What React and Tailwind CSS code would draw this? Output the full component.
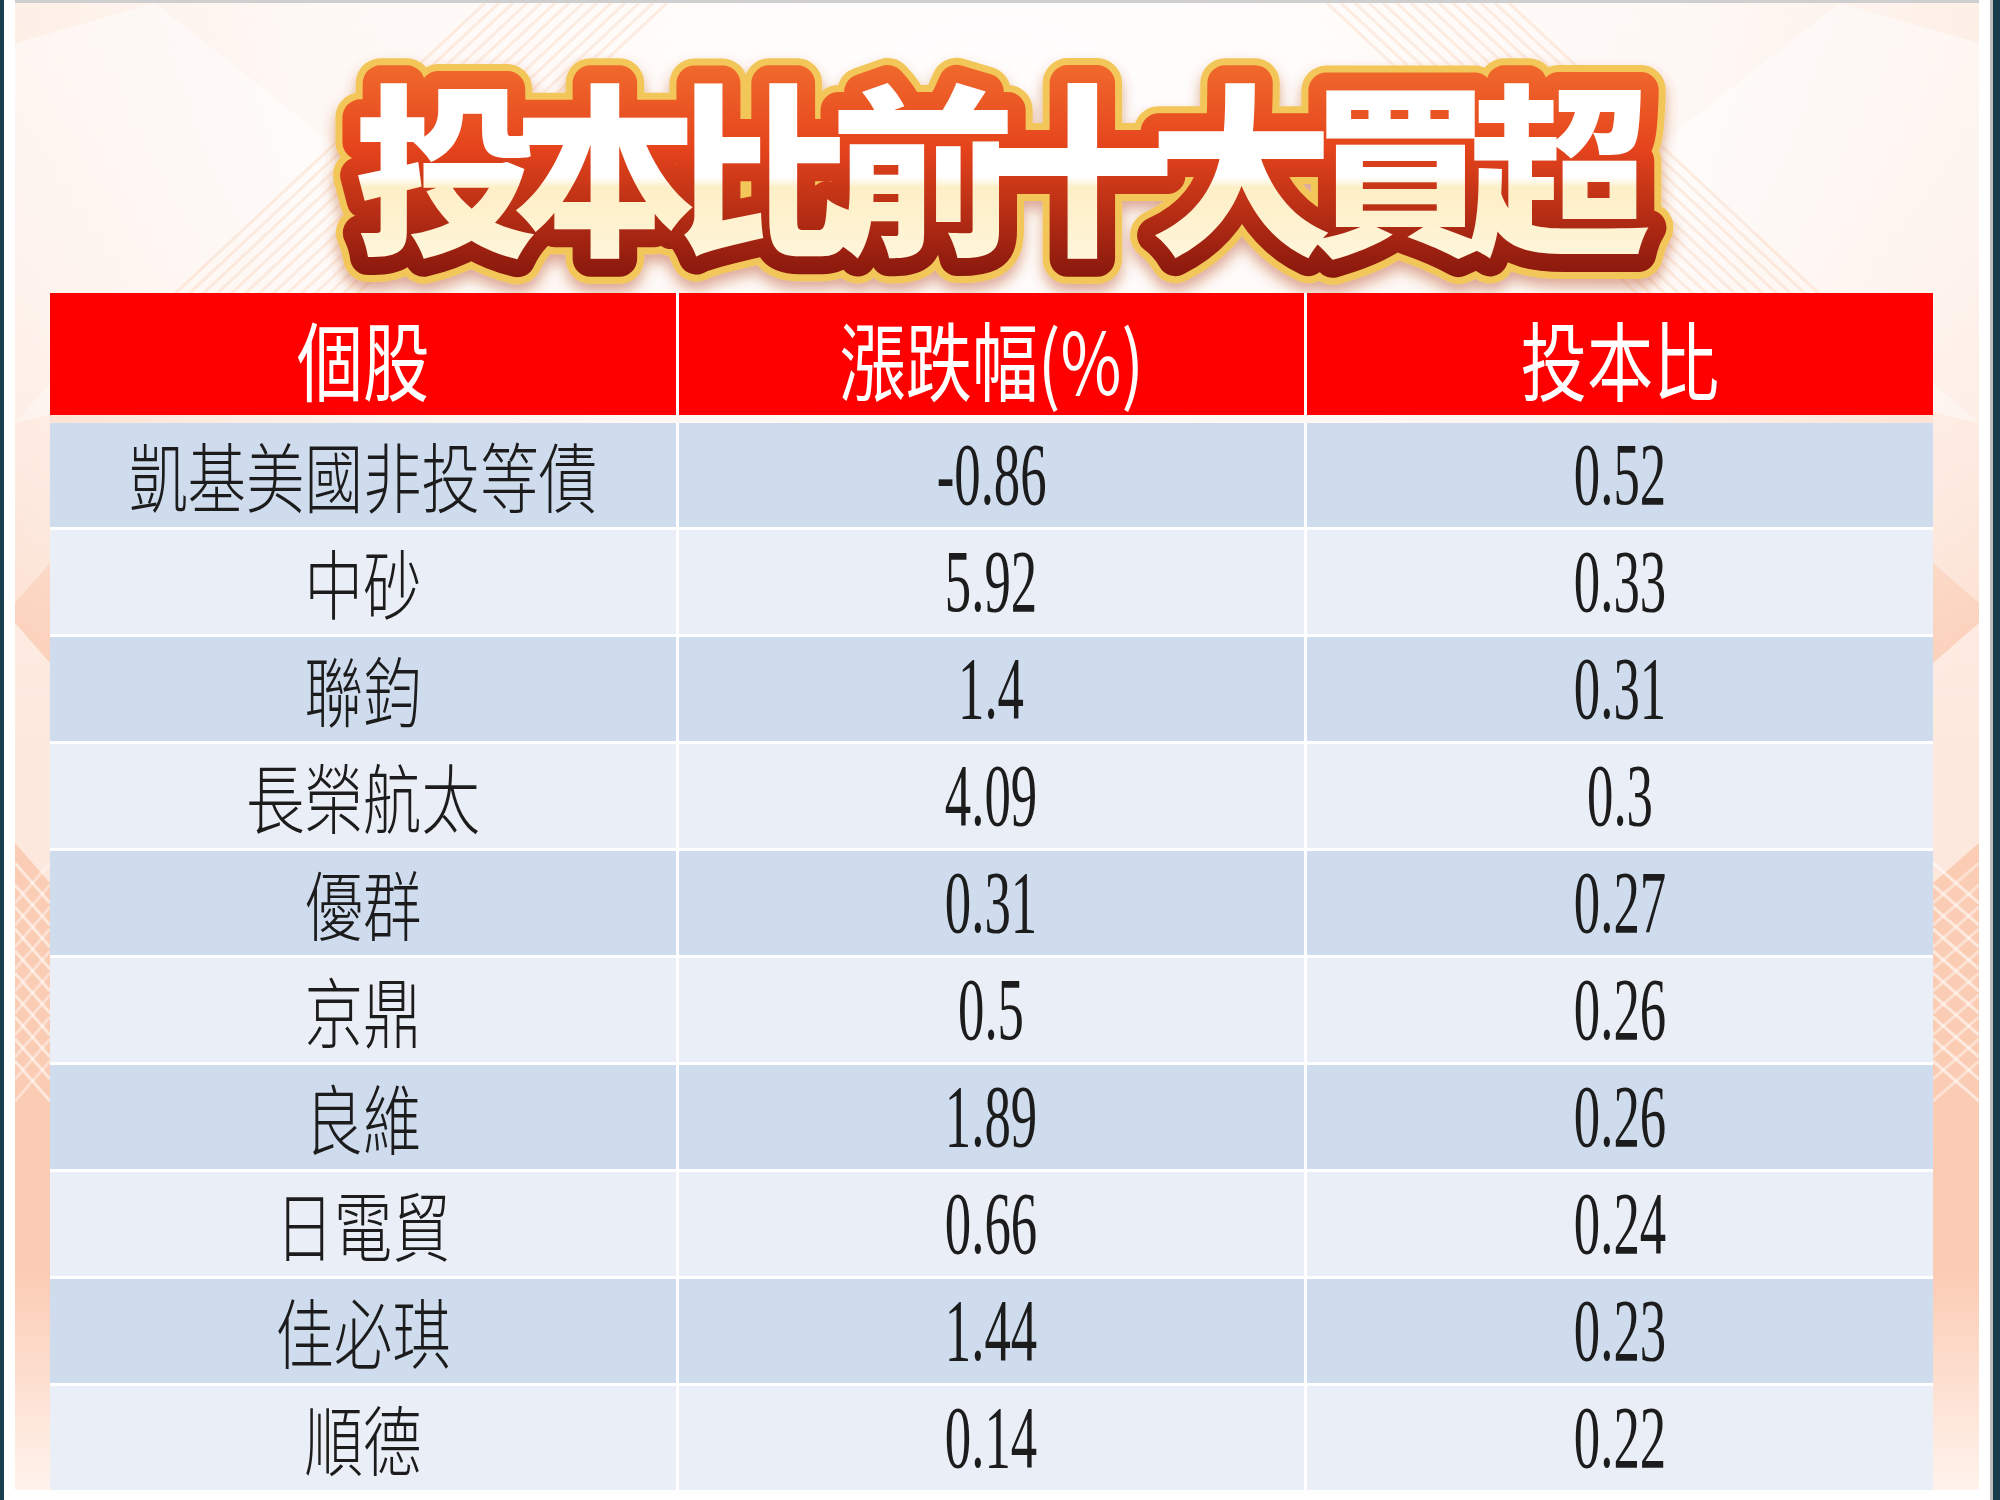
import React from "react";

const rows = [
  ["凱基美國非投等債", "-0.86", "0.52"],
  ["中砂", "5.92", "0.33"],
  ["聯鈞", "1.4", "0.31"],
  ["長榮航太", "4.09", "0.3"],
  ["優群", "0.31", "0.27"],
  ["京鼎", "0.5", "0.26"],
  ["良維", "1.89", "0.26"],
  ["日電貿", "0.66", "0.24"],
  ["佳必琪", "1.44", "0.23"],
  ["順德", "0.14", "0.22"],
];

const cjk = { fontFamily: '"Noto Sans CJK TC", "Noto Sans", sans-serif' };
const serif = { fontFamily: '"Liberation Serif", "Noto Sans CJK TC", serif' };

function Backdrop() {
  const lines = [];
  for (let i = 0; i < 14; i++) {
    lines.push(
      <line key={"l" + i} x1={150 + i * 14} y1={300} x2={470 + i * 14} y2={0} stroke="#f6b48e" strokeOpacity="0.22" strokeWidth="3" />
    );
    lines.push(
      <line key={"r" + i} x1={1814 - i * 14} y1={300} x2={1494 - i * 14} y2={0} stroke="#f6b48e" strokeOpacity="0.22" strokeWidth="3" />
    );
  }
  const side = [];
  for (let i = 0; i < 10; i++) {
    side.push(<line key={"sa" + i} x1={0} y1={860 + i * 22} x2={35} y2={900 + i * 22} stroke="#fff" strokeOpacity="0.55" strokeWidth="3" />);
    side.push(<line key={"sb" + i} x1={35} y1={860 + i * 22} x2={0} y2={900 + i * 22} stroke="#fff" strokeOpacity="0.4" strokeWidth="3" />);
    side.push(<line key={"sc" + i} x1={1918} y1={860 + i * 22} x2={1964} y2={900 + i * 22} stroke="#fff" strokeOpacity="0.55" strokeWidth="3" />);
    side.push(<line key={"sd" + i} x1={1964} y1={860 + i * 22} x2={1918} y2={900 + i * 22} stroke="#fff" strokeOpacity="0.4" strokeWidth="3" />);
  }
  return (
    <svg className="absolute inset-0 h-full w-full" viewBox="0 0 1964 1487" preserveAspectRatio="none">
      <defs>
        <linearGradient id="base" x1="0" y1="0" x2="0" y2="1">
          <stop offset="0" stopColor="#fdeadf" />
          <stop offset="0.5" stopColor="#fbcdb5" />
          <stop offset="0.85" stopColor="#fbcbb3" />
          <stop offset="1" stopColor="#fff3ec" />
        </linearGradient>
        <radialGradient id="glow" cx="0.5" cy="0.1" r="0.6">
          <stop offset="0" stopColor="#ffffff" stopOpacity="1" />
          <stop offset="0.6" stopColor="#ffffff" stopOpacity="0.7" />
          <stop offset="1" stopColor="#ffffff" stopOpacity="0" />
        </radialGradient>
      </defs>
      <rect width="1964" height="1487" fill="url(#base)" />
      <rect width="1964" height="1487" fill="url(#glow)" />
      <polygon points="0,40 0,420 520,300 140,0" fill="#ffffff" fillOpacity="0.45" />
      <polygon points="1964,40 1964,420 1444,300 1824,0" fill="#ffffff" fillOpacity="0.45" />
      <polygon points="0,420 35,380 35,560 0,600" fill="#ffffff" fillOpacity="0.35" />
      <polygon points="1964,420 1918,380 1918,560 1964,600" fill="#ffffff" fillOpacity="0.35" />
      <polygon points="0,620 35,660 35,880 0,840" fill="#ffffff" fillOpacity="0.55" />
      <polygon points="1964,620 1918,660 1918,880 1964,840" fill="#ffffff" fillOpacity="0.55" />
      {lines}
      {side}
    </svg>
  );
}

function Title() {
  const common = {
    x: 743,
    y: 158,
    textAnchor: "middle",
    dominantBaseline: "central",
    fontSize: 184,
    fontWeight: 900,
    letterSpacing: -25,
    fontFamily: '"Noto Sans CJK TC", "Noto Sans CJK SC", sans-serif',
    strokeLinejoin: "round",
  };
  const t = "投本比前十大買超";
  return (
    <svg width="1500" height="290" viewBox="0 0 1500 290">
      <defs>
        <linearGradient id="red" x1="0" y1="0" x2="0" y2="1">
          <stop offset="0" stopColor="#f57a34" />
          <stop offset="0.45" stopColor="#e5441c" />
          <stop offset="1" stopColor="#7c120b" />
        </linearGradient>
        <linearGradient id="fill" x1="0" y1="0" x2="0" y2="1">
          <stop offset="0" stopColor="#ffffff" />
          <stop offset="0.56" stopColor="#ffffff" />
          <stop offset="0.6" stopColor="#fdefc6" />
          <stop offset="1" stopColor="#fff8e4" />
        </linearGradient>
        <filter id="shadow" x="-10%" y="-20%" width="120%" height="150%">
          <feDropShadow dx="0" dy="8" stdDeviation="7" floodColor="#b3401a" floodOpacity="0.45" />
        </filter>
      </defs>
      <text {...common} fill="#f3c65a" stroke="#f3c65a" strokeWidth="50" filter="url(#shadow)">{t}</text>
      <text {...common} fill="url(#red)" stroke="url(#red)" strokeWidth="36">{t}</text>
      <text {...common} fill="url(#fill)">{t}</text>
    </svg>
  );
}

function Cell({ children, num, head }) {
  return (
    <div
      className={
        "flex items-center justify-center " +
        (head ? "h-[122px] bg-[#ff0000] text-white" : "h-[104px] text-[#1c1c1c]")
      }
    >
      {num ? (
        <span className="inline-block scale-x-[0.6] text-[88px] leading-[1.1]" style={serif}>
          {children}
        </span>
      ) : (
        <span
          className={
            "inline-block scale-x-[0.77] leading-[1.2] " + (head ? "text-[86px] pt-2" : "text-[76px] font-light")
          }
          style={cjk}
        >
          {children}
        </span>
      )}
    </div>
  );
}

export default function App() {
  return (
    <div className="flex h-[1500px] w-[2000px] bg-white">
      <div className="w-[4px] bg-[#173e4d]" />
      <div className="flex flex-1 flex-col pl-[11px] pr-[11px]">
        <div className="h-[3px] bg-[#cfcfcf]" />
        <div className="relative h-[1487px] overflow-hidden">
          <Backdrop />
          <div className="relative flex flex-col">
            <div className="flex h-[290px] justify-center">
              <Title />
            </div>
            <div className="ml-[35px] mr-[46px] grid grid-cols-3 gap-x-[3px] bg-white">
              <Cell head>個股</Cell>
              <Cell head>漲跌幅(%)</Cell>
              <Cell head>投本比</Cell>
            </div>
            <div className="ml-[35px] mr-[46px] mt-[8px] grid grid-cols-3 gap-[3px] bg-white">
              {rows.map((r, i) => {
                const bg = i % 2 === 0 ? "bg-[#cfdcee]" : "bg-[#e9eef7]";
                return (
                  <React.Fragment key={i}>
                    <div className={bg}><Cell>{r[0]}</Cell></div>
                    <div className={bg}><Cell num>{r[1]}</Cell></div>
                    <div className={bg}><Cell num>{r[2]}</Cell></div>
                  </React.Fragment>
                );
              })}
            </div>
          </div>
        </div>
      </div>
      <div className="w-[3px] bg-[#bdbdbd]" />
      <div className="w-[7px] bg-[#173e4d]" />
    </div>
  );
}
